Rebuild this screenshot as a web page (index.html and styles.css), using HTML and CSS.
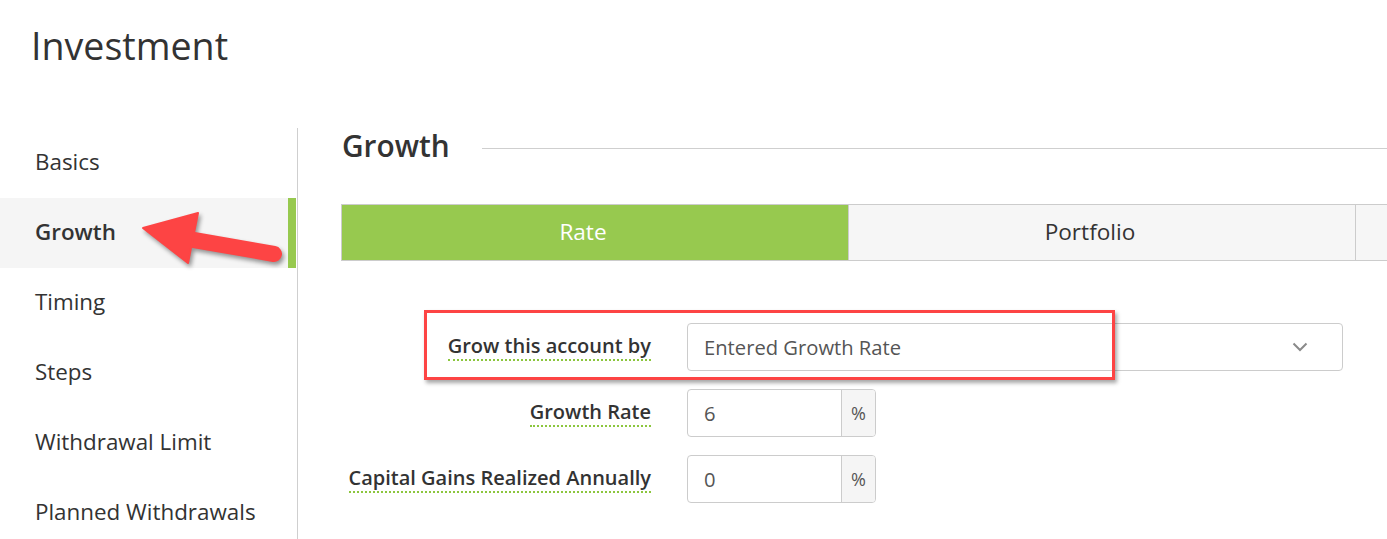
FILE: index.html
```html
<!DOCTYPE html>
<html lang="en">
<head>
<meta charset="utf-8">
<title>Investment</title>
<link rel="stylesheet" href="styles.css">
</head>
<body>
<h1 class="page-title">Investment</h1>
<div class="layout">
  <nav class="sidebar">
    <div class="nav-item">Basics</div>
    <div class="nav-item active">Growth</div>
    <div class="nav-item">Timing</div>
    <div class="nav-item">Steps</div>
    <div class="nav-item">Withdrawal Limit</div>
    <div class="nav-item">Planned Withdrawals</div>
    <svg class="arrow" width="170" height="80" viewBox="130 200 170 80" xmlns="http://www.w3.org/2000/svg">
      <g fill="#fd4444" stroke="#fd4444">
        <line x1="188" y1="239" x2="274" y2="254" stroke-width="16" stroke-linecap="round"/>
        <polygon points="143,228 198,213 188,263" stroke-width="2" stroke-linejoin="round"/>
      </g>
    </svg>
  </nav>
  <main class="main">
    <div class="section-head">
      <h2 class="section-title">Growth</h2>
      <div class="section-rule"></div>
    </div>
    <div class="tabs">
      <div class="tab tab-active">Rate</div>
      <div class="tab">Portfolio</div>
      <div class="tab"></div>
    </div>
    <div class="form">
      <div class="form-row">
        <div class="label-cell"><span class="label">Grow this account by</span></div>
        <div class="select">
          <span class="select-value">Entered Growth Rate</span>
          <svg class="chevron" width="16" height="10" viewBox="0 0 16 10" xmlns="http://www.w3.org/2000/svg"><path d="M1.5 1.5 L8 8 L14.5 1.5" fill="none" stroke="#8a8a8a" stroke-width="2"/></svg>
        </div>
        <div class="highlight"></div>
      </div>
      <div class="form-row">
        <div class="label-cell"><span class="label">Growth Rate</span></div>
        <div class="input-group">
          <span class="input-value">6</span>
          <span class="addon">%</span>
        </div>
      </div>
      <div class="form-row">
        <div class="label-cell"><span class="label">Capital Gains Realized Annually</span></div>
        <div class="input-group">
          <span class="input-value">0</span>
          <span class="addon">%</span>
        </div>
      </div>
    </div>
  </main>
</div>
</body>
</html>
```

FILE: styles.css
```css
html, body {
  margin: 0;
  padding: 0;
}
body {
  width: 1387px;
  height: 539px;
  overflow: hidden;
  background: #fff;
  color: #333;
  font-family: "Open Sans", "Liberation Sans", sans-serif;
}
.page-title {
  margin: 0;
  padding: 23px 0 0 31px;
  font-size: 37.6px;
  line-height: 46px;
  font-weight: 400;
  color: #333;
}
.layout {
  display: flex;
  margin-top: 59px;
  height: 411px;
}
.sidebar {
  position: relative;
  flex: none;
  width: 297px;
  border-right: 1px solid #cfcfcf;
}
.nav-item {
  box-sizing: border-box;
  width: 296px;
  height: 70px;
  margin-right: 1px;
  padding: 0 0 4px 35px;
  display: flex;
  align-items: center;
  font-size: 22.4px;
  color: #333;
}
.nav-item.active {
  background: #f5f5f5;
  border-right: 8px solid #97c94f;
  font-weight: 600;
}
.arrow {
  position: absolute;
  left: 130px;
  top: 72px;
  overflow: visible;
  filter: drop-shadow(2px 3px 2px rgba(0, 0, 0, 0.4));
}
.main {
  flex: none;
  width: 1600px;
  padding-left: 43px;
}
.section-head {
  display: flex;
  align-items: center;
  height: 36px;
}
.section-title {
  margin: 0;
  font-size: 29.8px;
  line-height: 36px;
  font-weight: 600;
  color: #333;
  padding-left: 1px;
}
.section-rule {
  width: 906px;
  height: 1px;
  background: #cfcfcf;
  margin-left: 32px;
  margin-top: 4px;
}
.tabs {
  display: flex;
  margin-top: 40px;
}
.tab {
  flex: none;
  box-sizing: border-box;
  width: 508px;
  height: 57px;
  padding: 0 24px 3px 0;
  border: 1px solid #cccccc;
  background: #f6f6f6;
  display: flex;
  align-items: center;
  justify-content: center;
  font-size: 22.6px;
  color: #333;
}
.tab + .tab {
  margin-left: -1px;
}
.tab-active {
  background: #97c94f;
  color: #fff;
}
.form {
  margin-top: 62px;
  display: flex;
  flex-direction: column;
  gap: 18px;
}
.form-row {
  position: relative;
  display: flex;
  align-items: center;
  height: 48px;
}
.label-cell {
  flex: none;
  width: 310px;
  display: flex;
  justify-content: flex-end;
  margin-right: 36px;
}
.label {
  font-size: 20px;
  line-height: 26px;
  font-weight: 600;
  color: #333;
  border-bottom: 2px dotted #8cc63e;
}
.select {
  flex: none;
  box-sizing: border-box;
  width: 656px;
  height: 48px;
  border: 1px solid #cccccc;
  border-radius: 4px;
  background: #fff;
  display: flex;
  align-items: center;
  justify-content: space-between;
  padding: 0 34px 0 16px;
}
.select-value,
.input-value {
  font-size: 20.2px;
  color: #555;
}
.chevron {
  display: block;
}
.input-group {
  flex: none;
  box-sizing: border-box;
  width: 189px;
  height: 48px;
  border: 1px solid #cccccc;
  border-radius: 4px;
  background: #fff;
  display: flex;
  align-items: stretch;
  overflow: hidden;
}
.input-value {
  flex: 1;
  display: flex;
  align-items: center;
  padding-left: 16px;
}
.addon {
  flex: none;
  width: 33px;
  border-left: 1px solid #cccccc;
  background: #f5f5f5;
  display: flex;
  align-items: center;
  justify-content: center;
  font-size: 18px;
  color: #555;
}
.highlight {
  position: absolute;
  left: 83px;
  top: -13px;
  box-sizing: border-box;
  width: 691px;
  height: 70px;
  border: 3px solid #fd4444;
  box-shadow: 2px 3px 4px rgba(0, 0, 0, 0.35);
  pointer-events: none;
}
```
